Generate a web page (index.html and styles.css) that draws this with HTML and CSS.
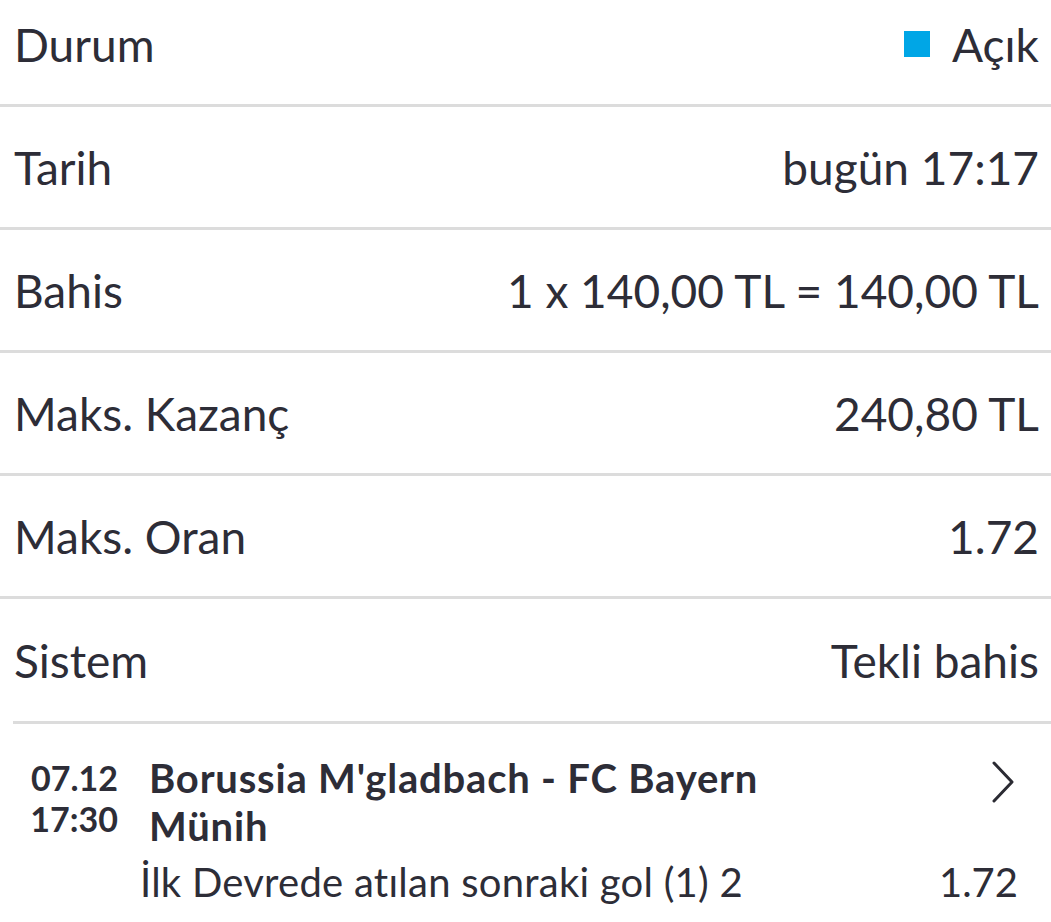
FILE: index.html
```html
<!DOCTYPE html>
<html lang="tr">
<head>
<meta charset="utf-8">
<link rel="stylesheet" href="styles.css">
</head>
<body>
<div class="sheet">
  <div class="row">
    <span class="label">Durum</span>
    <span class="value status"><span class="dot"></span>Açık</span>
  </div>
  <div class="row">
    <span class="label">Tarih</span>
    <span class="value">bugün 17:17</span>
  </div>
  <div class="row">
    <span class="label">Bahis</span>
    <span class="value">1 x 140,00 TL = 140,00 TL</span>
  </div>
  <div class="row">
    <span class="label">Maks. Kazanç</span>
    <span class="value">240,80 TL</span>
  </div>
  <div class="row">
    <span class="label">Maks. Oran</span>
    <span class="value">1.72</span>
  </div>
  <div class="row last">
    <span class="label">Sistem</span>
    <span class="value">Tekli bahis</span>
  </div>
  <div class="event">
    <div class="event-head">
      <div class="when">
        <span>07.12</span>
        <span>17:30</span>
      </div>
      <div class="title">Borussia M'gladbach - FC Bayern Münih</div>
      <svg class="chev" width="28" height="46" viewBox="0 0 28 46"><path d="M5 4 L23 23 L5 42" fill="none" stroke="#2b2b33" stroke-width="3" stroke-linecap="round" stroke-linejoin="round"/></svg>
    </div>
    <div class="pick">
      <span class="pick-name">İlk Devrede atılan sonraki gol (1) 2</span>
      <span class="pick-odd">1.72</span>
    </div>
  </div>
</div>
</body>
</html>
```

FILE: styles.css
```css
html, body {
  margin: 0;
  padding: 0;
  background: #ffffff;
}
body {
  font-family: "Lato", "Liberation Sans", sans-serif;
  color: #2d2d37;
  overflow: hidden;
}
.sheet {
  margin-top: -16px;
}
.row {
  height: 120px;
  border-bottom: 3px solid #dcdcdc;
  display: flex;
  align-items: center;
  justify-content: space-between;
  padding: 0 12px 0 14px;
  font-size: 46px;
  box-sizing: content-box;
}
.row.last {
  border-bottom: none;
  height: 122px;
}
.row.last + .event {
  border-top: 3px solid #dcdcdc;
  margin-left: 13px;
}
.status {
  display: flex;
  align-items: center;
}
.dot {
  width: 26px;
  height: 26px;
  background: #00a6e6;
  margin-right: 22px;
}
.event {
  padding-top: 30px;
}
.event-head {
  display: flex;
  align-items: flex-start;
}
.when {
  display: flex;
  flex-direction: column;
  font-weight: 700;
  font-size: 34px;
  line-height: 41px;
  width: 105px;
  align-items: flex-end;
  margin-top: 3px;
}
.title {
  font-weight: 700;
  font-size: 40px;
  line-height: 48px;
  letter-spacing: 0.8px;
  margin-left: 31px;
  width: 700px;
}
.chev {
  margin-left: auto;
  margin-right: 34px;
  margin-top: 5px;
}
.pick {
  display: flex;
  justify-content: space-between;
  font-size: 40px;
  line-height: 48px;
  margin-top: 8px;
  padding-left: 127px;
  padding-right: 33px;
}
.pick-name {
  letter-spacing: 0.25px;
}
```
